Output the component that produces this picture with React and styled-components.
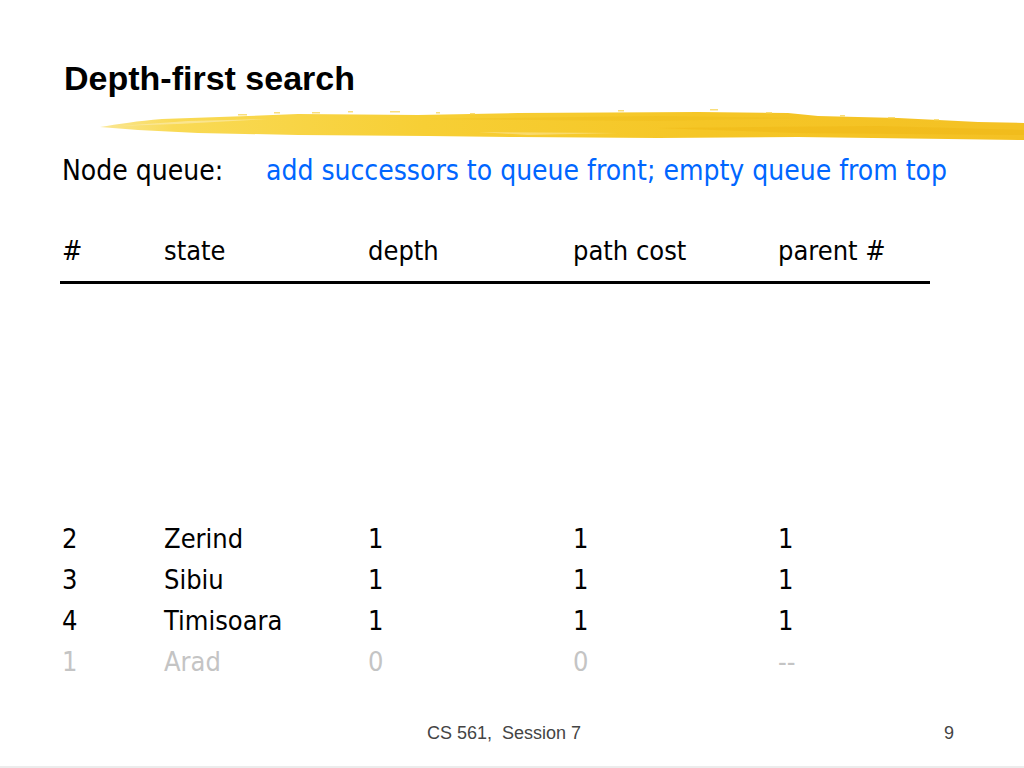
import React from 'react';
import styled, { createGlobalStyle } from 'styled-components';

const GlobalStyles = createGlobalStyle`
	html, body {
		margin: 0;
		padding: 0;
		background: #fff;
	}
	#root {
		width: 1024px;
		height: 768px;
	}
`;

const Slide = styled.div`
	width: 1024px;
	height: 768px;
	box-sizing: border-box;
	display: flex;
	flex-direction: column;
	font-family: 'DejaVu Sans', Tahoma, sans-serif;
	font-stretch: condensed;
	color: #000;
	border-bottom: 2px solid #ececec;
	overflow: hidden;
`;

const Title = styled.h1`
	margin: 0;
	padding: 58px 0 0 64px;
	font-family: 'Liberation Sans', Arial, sans-serif;
	font-stretch: normal;
	font-weight: bold;
	font-size: 34px;
	line-height: 40px;
`;

const Brush = styled.svg`
	display: block;
	margin: 4px 0 0 98px;
	width: 926px;
	height: 45px;
`;

const QueueLine = styled.div`
	display: flex;
	padding: 4px 0 0 62px;
	font-size: 28px;
	line-height: 40px;
`;

const QueueLabel = styled.span`
	width: 204px;
`;

const QueueRule = styled.span`
	color: #0066ff;
`;

const Table = styled.div`
	display: flex;
	flex-direction: column;
	margin: 39px 0 0 60px;
	width: 870px;
`;

const Row = styled.div`
	display: grid;
	grid-template-columns: 102px 204px 205px 205px 1fr;
	padding-left: 2px;
	font-size: 27px;
	line-height: 41px;
	color: ${p => (p.faded ? '#c4c4c4' : '#000')};
`;

const HeaderRow = styled(Row)`
	border-bottom: 3px solid #000;
	padding-bottom: 10px;
	margin-bottom: 234px;
`;

const Footer = styled.div`
	margin-top: auto;
	display: flex;
	justify-content: space-between;
	padding: 0 70px 22px 427px;
	font-family: 'Liberation Sans', Arial, sans-serif;
	font-stretch: normal;
	font-size: 18px;
	color: #444;
`;

const rows = [
	['2', 'Zerind', '1', '1', '1'],
	['3', 'Sibiu', '1', '1', '1'],
	['4', 'Timisoara', '1', '1', '1'],
];

// little flecks of dry paint along the top edge of the stroke
const flecks = [
	[140, 12, 9], [176, 10, 6], [214, 10, 8], [250, 9, 5], [292, 9, 10],
	[338, 10, 4], [372, 11, 5], [520, 8, 6], [612, 7, 8], [668, 10, 6],
	[742, 13, 5], [790, 15, 7], [836, 17, 5],
];

const BrushStroke = () => (
	<Brush viewBox="0 0 926 45" preserveAspectRatio="none">
		<defs>
			<linearGradient id="yel" x1="0" x2="1" y1="0" y2="0">
				<stop offset="0" stopColor="#fae796" />
				<stop offset="0.08" stopColor="#f9da55" />
				<stop offset="0.35" stopColor="#f7cf35" />
				<stop offset="0.65" stopColor="#f5c626" />
				<stop offset="1" stopColor="#f4c124" />
			</linearGradient>
		</defs>
		<path
			d="M2 25 C20 22 40 19 64 17 L150 14 L200 12 L320 13 L420 11 L600 10 L690 11 L720 14 L800 16 L880 20 L926 21 L926 38 L850 37 L700 35 L560 36 L420 35 L330 34 L200 33 L100 31 L40 28 Z"
			fill="url(#yel)"
		/>
		<path d="M20 24 L90 19 L170 17 L80 22 Z" fill="#fbe9a8" opacity="0.7" />
		<path d="M330 17 L560 14 L700 16 L560 19 Z" fill="#efb916" opacity="0.35" />
		<path d="M560 26 L780 24 L926 28 L926 33 L700 31 Z" fill="#eeb412" opacity="0.4" />
		<path d="M380 30 L520 31 L430 33 Z" fill="#fbe49a" opacity="0.6" />
		{flecks.map(([x, y, w]) => (
			<rect key={x} x={x} y={y} width={w} height="1.5" fill="#f8d65a" opacity="0.8" />
		))}
	</Brush>
);

const App = () => (
	<Slide>
		<GlobalStyles />
		<Title>Depth-first search</Title>
		<BrushStroke />
		<QueueLine>
			<QueueLabel>Node queue:</QueueLabel>
			<QueueRule>add successors to queue front; empty queue from top</QueueRule>
		</QueueLine>
		<Table>
			<HeaderRow>
				<span>#</span>
				<span>state</span>
				<span>depth</span>
				<span>path cost</span>
				<span>parent #</span>
			</HeaderRow>
			{rows.map(r => (
				<Row key={r[0]}>
					{r.map((c, i) => (
						<span key={i}>{c}</span>
					))}
				</Row>
			))}
			<Row faded>
				<span>1</span>
				<span>Arad</span>
				<span>0</span>
				<span>0</span>
				<span>--</span>
			</Row>
		</Table>
		<Footer>
			<span>CS 561,&nbsp; Session 7</span>
			<span>9</span>
		</Footer>
	</Slide>
);

export default App;
